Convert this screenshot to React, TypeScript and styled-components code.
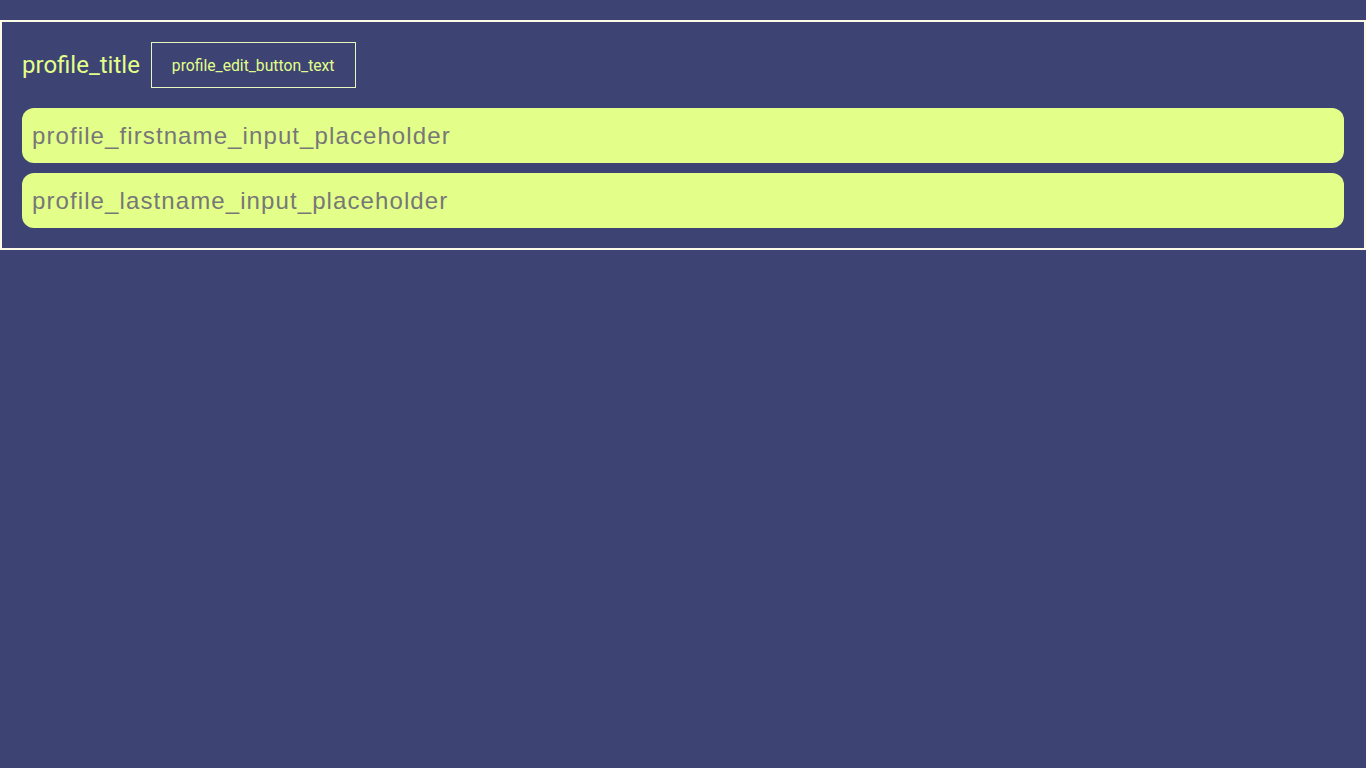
import styled, { createGlobalStyle } from "styled-components";

const GlobalStyle = createGlobalStyle`
  html, body {
    margin: 0;
    padding: 0;
    background-color: #3d4373;
  }
  * {
    box-sizing: border-box;
  }
`;

const Page = styled.div`
  width: 100%;
  min-height: 768px;
  padding-top: 20px;
  background-color: #3d4373;
`;

const ProfileCard = styled.section`
  display: flex;
  flex-direction: column;
  gap: 20px;
  width: 100%;
  padding: 20px;
  border: 2px solid #fdfbe6;
`;

const HeaderRow = styled.div`
  display: flex;
  align-items: center;
  gap: 11px;
`;

const Title = styled.h1`
  margin: 0;
  font-family: Roboto, "Liberation Sans", sans-serif;
  font-size: 24px;
  font-weight: 400;
  color: #e3ff8a;
`;

const EditButton = styled.button`
  height: 46px;
  padding: 0 20px;
  background: transparent;
  border: 1px solid #e8f7c0;
  font-family: Roboto, "Liberation Sans", sans-serif;
  font-size: 15.7px;
  color: #e3ff8a;
  cursor: pointer;
`;

const InputList = styled.div`
  display: flex;
  flex-direction: column;
  gap: 10px;
`;

const TextInput = styled.input`
  width: 100%;
  height: 55px;
  padding: 0 10px;
  border: none;
  border-radius: 12px;
  background-color: #e3ff8a;
  font-family: "Liberation Sans", Arial, sans-serif;
  font-size: 24px;
  letter-spacing: 1.1px;
  color: #333;
  outline: none;

  &::placeholder {
    color: #777777;
  }
`;

const App = () => {
  return (
    <>
      <GlobalStyle />
      <Page>
        <ProfileCard>
          <HeaderRow>
            <Title>profile_title</Title>
            <EditButton>profile_edit_button_text</EditButton>
          </HeaderRow>
          <InputList>
            <TextInput placeholder="profile_firstname_input_placeholder" />
            <TextInput placeholder="profile_lastname_input_placeholder" />
          </InputList>
        </ProfileCard>
      </Page>
    </>
  );
};

export default App;
